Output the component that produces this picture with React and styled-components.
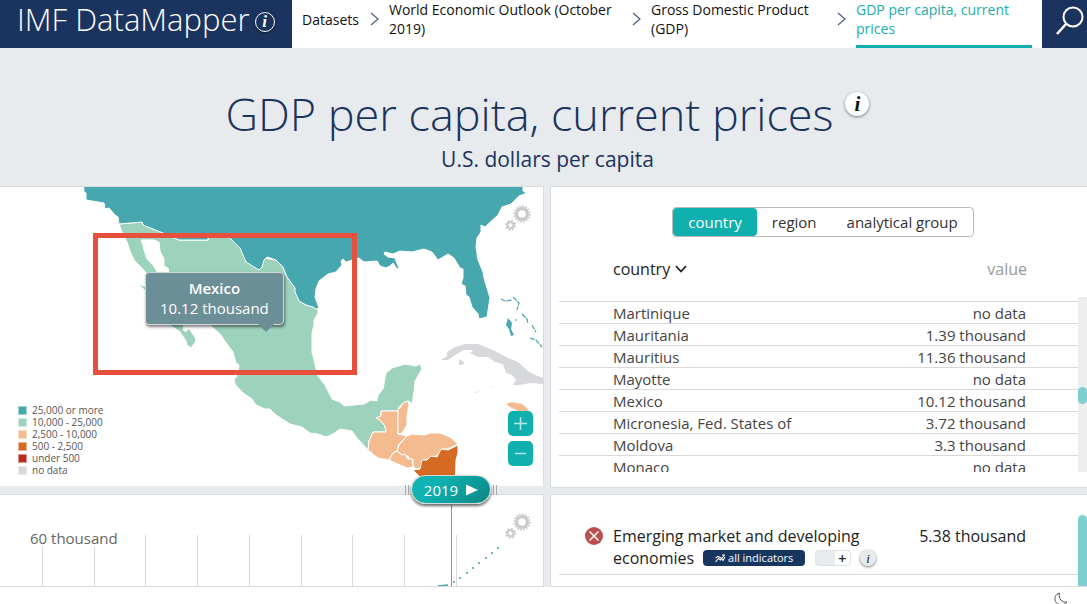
import { useState } from "react";
import styled, { createGlobalStyle } from "styled-components";

const crumbs = [
    { label: "Datasets", width: 58 },
    { label: "World Economic Outlook (October 2019)", width: 233 },
    { label: "Gross Domestic Product (GDP)", width: 176 },
    { label: "GDP per capita, current prices", width: 176, active: true },
];

const tabs = ["country", "region", "analytical group"];

const countries = [
    { name: "Martinique", value: "no data" },
    { name: "Mauritania", value: "1.39 thousand" },
    { name: "Mauritius", value: "11.36 thousand" },
    { name: "Mayotte", value: "no data" },
    { name: "Mexico", value: "10.12 thousand" },
    { name: "Micronesia, Fed. States of", value: "3.72 thousand" },
    { name: "Moldova", value: "3.3 thousand" },
    { name: "Monaco", value: "no data" },
];

const legend = [
    { label: "25,000 or more", color: "#47a7af" },
    { label: "10,000 - 25,000", color: "#9dd3bc" },
    { label: "2,500 - 10,000", color: "#f3bb8f" },
    { label: "500 - 2,500", color: "#d66a22" },
    { label: "under 500", color: "#bd2a1a" },
    { label: "no data", color: "#d7d8dc" },
];

const gridLines = [42, 94, 145, 197, 249, 301, 352, 404, 456];
const forecast = [[454, 87], [460, 83], [467, 78], [473, 73], [479, 68], [486, 63], [492, 58], [498, 53]];

/* Gears : settings icon shown in the corner of the map and of the chart */
const Gears = () => (
    <svg width="26" height="26" viewBox="0 0 26 26" fill="none" stroke="#c9c9c9" aria-hidden="true">
        <circle cx="17" cy="9" r="5.4" strokeWidth="3.2" />
        <circle cx="17" cy="9" r="7.7" strokeWidth="2" strokeDasharray="1.51 1.51" />
        <circle cx="5.5" cy="20.3" r="3" strokeWidth="1.9" />
        <circle cx="5.5" cy="20.3" r="4.6" strokeWidth="1.8" strokeDasharray="1.81 1.81" />
    </svg>
);

/* Chevron : separator between the breadcrumb items */
const Chevron = () => (
    <svg width="9" height="14" viewBox="0 0 9 14" fill="none" stroke="#4a5c85" strokeWidth="1.2" aria-hidden="true">
        <path d="M1 1 L8 7 L1 13" />
    </svg>
);

const WorldMap = () => (
    <MapSvg viewBox="0 187 543 299" preserveAspectRatio="xMinYMin slice" aria-label="Map">
        <g stroke="#fff" strokeWidth="1" strokeLinejoin="round">
            <path fill="#9dd3bc" d="M119 224 L122 232 127 242 130 251 134 260 142 268 147 274 155 290 160 310 170 325 180 332 186 341 187 345 191 348 196 341 195 337 190 330 188 328 187 331 184 331 183 325 176 305 166 288 157 272 153 265 147 259 144 250 143 245 141 240 154 240 159 242 160 251 164 259 164 266 168 268 169 273 180 290 195 306 210 325 220 334 227 344 233 352 236 363 239 365 238 372 236 378 234 377 235 384 241 391 246 395 252 399 256 405 265 409 270 409 276 415 290 424 302 427 310 433 318 434 326 437 333 434 340 429 346 430 352 431 357 438 368 450 369 441 373 432 386 432 385 426 380 420 376 418 381 416 381 411 398 411 399 407 405 402 409 401 412 404 414 392 415 381 422 369 420 364 416 366 405 364 392 368 386 373 383 389 378 395 377 401 371 400 364 404 344 406 340 402 332 399 325 385 318 376 312 352 312 333 314 325 314 320 318 313 318 308 306 305 299 301 295 288 287 277 283 267 276 260 264 258 240 248 231 239 225 234 208 234 208 240 179 240 163 233 143 225 142 222 Z" />
            <path fill="#47a7af" d="M83 180 L84 192 86 193 86 200 104 203 105 209 109 208 115 215 118 217 119 224 142 222 143 225 163 233 179 240 208 240 208 234 225 234 231 239 240 248 246 262 259 270 262 267 264 260 267 257 276 260 283 267 287 277 295 288 295 292 299 301 306 305 313 307 316 309 319 308 318 305 315 297 316 289 319 281 328 274 336 272 342 265 341 261 343 259 346 262 359 258 364 262 377 261 380 266 386 268 390 266 393 263 397 269 399 268 396 261 395 258 388 257 384 254 385 252 393 254 400 251 412 252 424 249 432 252 438 260 448 254 454 258 460 268 463 269 463 278 461 284 465 286 466 295 469 297 472 307 478 314 479 319 487 317 490 298 484 278 483 272 478 260 476 247 477 238 481 232 481 225 485 227 498 215 502 207 511 204 519 196 527 193 523 191 523 180 Z" />
            <path fill="#f3bb8f" d="M381 411 L398 411 398 434 407 436 398 445 398 450 393 453 389 460 378 458 368 450 369 441 373 432 386 432 385 426 380 420 376 418 381 416 Z" />
            <path fill="#f3bb8f" d="M398 409 L400 408 403 403 408 401 409 405 407 415 407 425 402 433 398 434 Z" />
            <path fill="#f3bb8f" d="M407 436 L412 434 425 435 430 433 440 433 450 437 458 444 454 446 448 449 442 449 438 455 432 458 424 460 421 468 416 469 413 466 413 459 409 459 408 456 402 455 397 451 399 445 Z" />
            <path fill="#f3bb8f" d="M389 460 L393 453 397 451 402 455 405 454 408 459 412 459 413 467 407 468 400 465 Z" />
            <path fill="#d66a22" d="M458 445 L458 453 456 460 455 487 424 487 419 476 413 470 420 469 422 460 427 460 431 456 437 457 441 449 448 450 Z" />
        </g>
        <path fill="#9dd3bc" d="M140 285 L145 287 145 290 Z" />
        <path fill="#f3bb8f" d="M506 404 L512 402 522 404 526 407 529 411 520 412 510 407 Z" />
        <g fill="#d7d8dc">
            <path d="M441 360 L447 356 447 352 455 347 465 344 478 344 488 348 497 352 508 358 518 362 528 371 535 375 544 378 544 384 530 383 520 385 513 385 516 380 512 375 506 373 503 364 495 362 488 357 478 357 470 353 473 350 464 350 455 355 448 360 Z" />
            <path d="M459 359 L464 362 463 365 459 365 Z M475 392 L479 391 477 393 Z M489 388 L492 386 492 387 Z" />
        </g>
        <g fill="none" stroke="#47a7af" strokeWidth="1.2" strokeDasharray="5 1">
            <path d="M501 299 L505 301 512 300 M513 297 L519 303 517 310 M522 314 L527 319 528 324 M532 325 L536 332 M530 338 L536 340 542 347 M515 320 L517 320" />
        </g>
        <path fill="#47a7af" d="M508 318 L512 323 511 329 514 335 511 336 509 329 506 325 Z" />
    </MapSvg>
);

const App = () => {
    const [selectedTab, setSelectedTab] = useState("country");

    return (
    <>
    <GlobalStyle />
    <Header>
        <Brand>
            <BrandName href="#">IMF DataMapper</BrandName>
            <InfoButton $size={20} $dark aria-label="About">i</InfoButton>
        </Brand>
        <Breadcrumbs>
            {crumbs.map((crumb, index) => (
                <CrumbItem key={crumb.label}>
                    {index > 0 && <Chevron />}
                    <CrumbLink href="#" $width={crumb.width} $active={crumb.active}>
                        {crumb.label}
                    </CrumbLink>
                </CrumbItem>
            ))}
        </Breadcrumbs>
        <SearchButton aria-label="Search">
            <svg width="30" height="30" viewBox="0 0 30 30" fill="none" stroke="#fff" strokeWidth="2">
                <circle cx="18" cy="11" r="9.5" />
                <path d="M11 18 L2 28" strokeWidth="2.6" />
            </svg>
        </SearchButton>
    </Header>

    <Hero>
        <TitleRow>
            <Title>GDP per capita, current prices</Title>
            <InfoButton $size={24} aria-label="Indicator details">i</InfoButton>
        </TitleRow>
        <Subtitle>U.S. dollars per capita</Subtitle>
    </Hero>

    <Panels>
        <Column>
            <MapPanel>
                <WorldMap />
                <Highlight />
                <Tooltip>
                    <strong>Mexico</strong>
                    <span>10.12 thousand</span>
                </Tooltip>
                <SettingsButton aria-label="Map settings"><Gears /></SettingsButton>
                <ZoomControls>
                    <ZoomButton aria-label="Zoom in">
                        <svg width="13" height="13" stroke="#b5e8e7" strokeWidth="1.5"><path d="M0 6.5 H13 M6.5 0 V13" /></svg>
                    </ZoomButton>
                    <ZoomButton aria-label="Zoom out">
                        <svg width="13" height="13" stroke="#b5e8e7" strokeWidth="1.5"><path d="M1 6.5 H12" /></svg>
                    </ZoomButton>
                </ZoomControls>
                <Legend>
                    {legend.map((item) => (
                        <LegendItem key={item.label}>
                            <Swatch $color={item.color} />
                            {item.label}
                        </LegendItem>
                    ))}
                </Legend>
            </MapPanel>
            <ChartPanel>
                <ChartLabel>60 thousand</ChartLabel>
                <ChartSvg viewBox="0 0 543 91" preserveAspectRatio="xMinYMin slice" aria-label="Chart">
                    {gridLines.map((x, index) => (
                        <path key={x} d={`M${x + 0.5} ${index < 2 ? 52 : 40} V92`} stroke="#d9d9d9" />
                    ))}
                    <path d="M451.5 10 V92" stroke="#5ba5ac" />
                    <path d="M438 91 L448 90" stroke="#47a7af" strokeWidth="1.5" />
                    {forecast.map(([x, y]) => (
                        <circle key={x} cx={x} cy={y} r="1.1" fill="#47a7af" />
                    ))}
                </ChartSvg>
                <SettingsButton aria-label="Chart settings"><Gears /></SettingsButton>
                <YearControl>
                    <Grip />
                    <YearButton>
                        2019
                        <svg width="12" height="12" viewBox="0 0 12 12" fill="#fff"><path d="M0 0.5 L12 6 L0 11.5 Z" /></svg>
                    </YearButton>
                    <Grip />
                </YearControl>
            </ChartPanel>
        </Column>

        <Column>
            <ListPanel>
                <Tabs>
                    {tabs.map((tab) => (
                        <TabButton key={tab} $active={tab === selectedTab} onClick={() => setSelectedTab(tab)}>
                            {tab}
                        </TabButton>
                    ))}
                </Tabs>
                <SortRow>
                    <SortButton>
                        country
                        <svg width="12" height="8" viewBox="0 0 12 8" fill="none" stroke="#222" strokeWidth="1.8"><path d="M1 1 L6 6.5 L11 1" /></svg>
                    </SortButton>
                    <SortButton $muted>value</SortButton>
                </SortRow>
                <ScrollArea>
                    <CountryTable>
                        <tbody>
                            {countries.map((country) => (
                                <tr key={country.name}>
                                    <th scope="row">{country.name}</th>
                                    <td>{country.value}</td>
                                </tr>
                            ))}
                        </tbody>
                    </CountryTable>
                    <ScrollTrack>
                        <ScrollThumb />
                    </ScrollTrack>
                </ScrollArea>
            </ListPanel>
            <SelectionPanel>
                <Selection>
                    <RemoveButton aria-label="Remove">
                        <svg width="18" height="18" viewBox="0 0 18 18" fill="none" stroke="#fff" strokeWidth="1.5">
                            <circle cx="9" cy="9" r="9" fill="#bd4e50" stroke="none" />
                            <path d="M4.5 4.5 L13.5 13.5 M13.5 4.5 L4.5 13.5" />
                        </svg>
                    </RemoveButton>
                    <SelectionName>
                        Emerging market and developing
                        <SelectionLine>
                            economies
                            <IndicatorsButton>
                                <svg width="11" height="9" viewBox="0 0 11 9" fill="none" stroke="#fff" strokeWidth="1.1">
                                    <path d="M0.5 8 L3.5 4.5 L5.5 6 L9.5 1 M0.5 4 L3 2.5 L6 4 L8 6.5 L10 3 M7 1 H10" />
                                </svg>
                                all indicators
                            </IndicatorsButton>
                            <AddButton aria-label="Add">+</AddButton>
                            <InfoButton $size={16} $soft aria-label="Group details">i</InfoButton>
                        </SelectionLine>
                    </SelectionName>
                    <SelectionValue>5.38 thousand</SelectionValue>
                </Selection>
                <SideBar />
            </SelectionPanel>
        </Column>
    </Panels>

    <Footer>
        <ThemeButton aria-label="Dark mode">
            <svg width="14" height="14" viewBox="0 0 14 14" fill="none" stroke="#555" strokeWidth="1">
                <path d="M5.5 1 C1.5 2 0 6 1.5 9.5 C3.5 13.5 10 14 13 10 C8 11 4 6.5 5.5 1 Z" />
            </svg>
        </ThemeButton>
    </Footer>
    </>
)}

export default App;

const GlobalStyle = createGlobalStyle`
    * {
        box-sizing: border-box;
    }

    body {
        margin: 0;
        background-color: #fff;
        color: #444;
        font-family: "Open Sans", "Noto Sans", sans-serif;
        font-size: 16px;
        overflow: hidden;
    }

    button {
        padding: 0;
        border: none;
        background: none;
        color: inherit;
        font: inherit;
        cursor: pointer;
    }

    svg {
        display: block;
        flex: none;
    }
`

const Header = styled.header`
    display: flex;
    height: 48px;
    background-color: #fff;
`

const Brand = styled.div`
    display: flex;
    flex: none;
    align-items: center;
    gap: 5px;
    width: 292px;
    padding: 0 0 5px 17px;
    background-color: #1b335f;
`

const BrandName = styled.a`
    align-self: flex-start;
    color: #fff;
    font-size: 31px;
    font-weight: 300;
    line-height: 38px;
    white-space: nowrap;
    text-decoration: none;
`

const InfoButton = styled.button`
    display: flex;
    flex: none;
    align-items: center;
    justify-content: center;
    width: ${({ $size }) => $size}px;
    height: ${({ $size }) => $size}px;
    border: ${({ $dark }) => ($dark ? "1px solid #fff" : "none")};
    border-radius: 50%;
    background-color: ${({ $dark, $soft }) => ($dark ? "transparent" : $soft ? "#e8ebee" : "#fff")};
    box-shadow: 0 1px 3px rgba(0, 0, 0, 0.5);
    color: ${({ $dark }) => ($dark ? "#fff" : "#111")};
    font-family: "Liberation Serif", serif;
    font-size: ${({ $size }) => $size - 3}px;
    font-style: italic;
    font-weight: ${({ $soft }) => ($soft ? 400 : 700)};
    line-height: 1;
`

const Breadcrumbs = styled.nav`
    display: flex;
    flex: 1;
    gap: 10px;
    padding-left: 10px;
`

const CrumbItem = styled.div`
    display: flex;
    align-items: center;
    gap: 10px;

    > svg {
        margin-bottom: 10px;
    }
`

const CrumbLink = styled.a`
    display: flex;
    align-items: center;
    width: ${({ $width }) => $width}px;
    height: 48px;
    padding-bottom: ${({ $active }) => ($active ? 7 : 10)}px;
    border-bottom: ${({ $active }) => ($active ? "3px solid #0fb0ae" : "none")};
    color: ${({ $active }) => ($active ? "#22adab" : "#111")};
    font-size: 14px;
    line-height: 19px;
    text-decoration: none;
`

const SearchButton = styled.button`
    display: flex;
    flex: none;
    width: 45px;
    padding: 6px 0 0 13px !important;
    background-color: #1b335f !important;
`

const Hero = styled.section`
    display: flex;
    flex-direction: column;
    align-items: center;
    height: 138px;
    padding: 35px 0 0 8px;
    background-color: #e8ebee;
    color: #1b335f;
`

const TitleRow = styled.div`
    display: flex;
    gap: 12px;

    button {
        margin-top: 9px;
    }
`

const Title = styled.h1`
    margin: 0;
    font-size: 45px;
    font-weight: 300;
    line-height: 62px;
    white-space: nowrap;
`

const Subtitle = styled.p`
    margin: 0;
    font-size: 21px;
    line-height: 28px;
`

const Panels = styled.main`
    display: grid;
    grid-template-columns: minmax(0, 544fr) minmax(0, 537fr);
    gap: 6px;
    background-color: #e8ebee;
`

const Column = styled.div`
    display: flex;
    flex-direction: column;
    gap: 7px;
`

const Panel = styled.section`
    position: relative;
    border: 1px solid #d9dbde;
    background-color: #fff;
`

const MapPanel = styled(Panel)`
    display: flex;
    align-items: flex-end;
    height: 301px;
    border-left: none;
    border-bottom-color: #e8ebee;
    overflow: hidden;
`

const MapSvg = styled.svg`
    position: absolute;
    inset: 0;
    width: 100%;
    height: 100%;
`

const Highlight = styled.div`
    position: absolute;
    top: 46px;
    left: 93px;
    width: 264px;
    height: 142px;
    border: 5px solid #e94f3d;
`

const Tooltip = styled.div`
    position: absolute;
    top: 85px;
    left: 145px;
    display: flex;
    flex-direction: column;
    align-items: center;
    padding: 6px 14px;
    border: 1px solid #d3d8da;
    border-radius: 4px;
    background-color: #6c8e97;
    box-shadow: 1px 2px 3px rgba(0, 0, 0, 0.5);
    color: #fff;
    font-size: 15px;
    line-height: 20px;
    white-space: nowrap;

    strong {
        font-weight: 600;
        line-height: 19px;
    }

    &::after {
        content: "";
        position: absolute;
        top: 100%;
        right: 9px;
        border: 8px solid transparent;
        border-top-color: #6c8e97;
        border-bottom: none;
    }
`

const SettingsButton = styled.button`
    position: absolute;
    top: 18px;
    right: 12px;
`

const ZoomControls = styled.div`
    position: absolute;
    right: 10px;
    bottom: 20px;
    display: flex;
    flex-direction: column;
    gap: 5px;
`

const ZoomButton = styled.button`
    display: flex;
    align-items: center;
    justify-content: center;
    width: 25px;
    height: 25px;
    border-radius: 5px !important;
    background-color: #0fb0ae !important;
`

const Legend = styled.ul`
    position: relative;
    margin: 0 0 10px 18px;
    padding: 0;
    list-style: none;
`

const LegendItem = styled.li`
    display: flex;
    align-items: center;
    gap: 5px;
    color: #555;
    font-size: 10px;
    line-height: 12px;
`

const Swatch = styled.span`
    width: 9px;
    height: 9px;
    border: 1px solid rgba(255, 255, 255, 0.5);
    background-color: ${({ $color }) => $color};
`

const ChartPanel = styled(Panel)`
    height: 93px;
    border-left: none;
`

const ChartLabel = styled.div`
    position: absolute;
    top: 33px;
    left: 30px;
    color: #666;
    font-size: 15px;
    line-height: 20px;
`

const ChartSvg = styled.svg`
    width: 100%;
    height: 91px;
`

const YearControl = styled.div`
    position: absolute;
    top: -20px;
    left: 405px;
    display: flex;
    align-items: center;
    gap: 2px;
`

const Grip = styled.span`
    width: 4px;
    height: 10px;
    border: 1px solid #aaa;
    border-width: 0 1px;
`

const YearButton = styled.button`
    display: flex;
    align-items: center;
    justify-content: center;
    gap: 8px;
    width: 80px;
    height: 29px;
    border: 1px solid #d5dcdc !important;
    border-radius: 15px !important;
    background: linear-gradient(135deg, #0fb3b1 30%, #0b8583) !important;
    box-shadow: 0 2px 3px rgba(0, 0, 0, 0.6);
    color: #fff !important;
    font-size: 15px !important;
    font-weight: 500 !important;
`

const ListPanel = styled(Panel)`
    display: flex;
    flex-direction: column;
    height: 302px;
    margin-bottom: -1px;
    padding-top: 20px;
    border-right: none;
`

const Tabs = styled.div`
    display: flex;
    align-self: center;
    height: 30px;
    margin-left: 8px;
    border: 1px solid #bbb;
    border-radius: 4px;
`

const TabButton = styled.button`
    height: 28px;
    padding: 0 15px !important;
    border-radius: 4px !important;
    background-color: ${({ $active }) => ($active ? "#0fb0ae" : "transparent")} !important;
    color: ${({ $active }) => ($active ? "#fff" : "#333")} !important;
    font-size: 15px !important;
    font-weight: ${({ $active }) => ($active ? 500 : 400)} !important;
`

const SortRow = styled.div`
    display: flex;
    align-items: center;
    justify-content: space-between;
    height: 60px;
    padding: 4px 60px 0 62px;
`

const SortButton = styled.button`
    display: flex;
    align-items: center;
    gap: 5px;
    color: ${({ $muted }) => ($muted ? "#999" : "#222")} !important;
`

const ScrollArea = styled.div`
    display: flex;
    height: 175px;
    overflow: hidden;
`

const CountryTable = styled.table`
    flex: 1;
    align-self: flex-start;
    margin: 4px 0 0 8px;
    border-collapse: collapse;
    font-size: 15px;
    line-height: 20px;

    tr {
        border-top: 1px solid #d9d9d9;
    }

    th,
    td {
        padding: 1px 0 0;
    }

    th {
        padding-left: 54px;
        font-weight: 400;
        text-align: left;
    }

    td {
        padding-right: 52px;
        text-align: right;
    }
`

const ScrollTrack = styled.div`
    width: 9px;
    padding-top: 90px;
    background-color: #eee;
`

const ScrollThumb = styled.div`
    height: 17px;
    border-radius: 5px;
    background-color: #7dd0cf;
`

const SelectionPanel = styled(Panel)`
    display: flex;
    height: 93px;
    padding-top: 20px;
    border-right: none;
`

const Selection = styled.div`
    display: flex;
    flex: 1;
    align-items: flex-start;
    height: 60px;
    margin-left: 8px;
    padding: 10px 52px 0 26px;
    border-bottom: 1px solid #d9d9d9;
    color: #222;
    line-height: 22px;
`

const RemoveButton = styled.button`
    margin: 2px 10px 0 0;
`

const SelectionName = styled.div`
    flex: 1;
    white-space: nowrap;
`

const SelectionLine = styled.div`
    display: flex;
    align-items: center;
`

const IndicatorsButton = styled.button`
    display: flex;
    align-items: center;
    justify-content: center;
    gap: 2px;
    width: 102px;
    height: 16px;
    margin: 0 10px 0 9px;
    border-radius: 4px !important;
    background-color: #17365f !important;
    color: #fff !important;
    font-size: 11px !important;
    font-weight: 500 !important;
`

const AddButton = styled.button`
    width: 36px;
    height: 16px;
    margin-right: 9px;
    padding-left: 18px !important;
    border: 1px solid #dfe2e5 !important;
    border-radius: 4px !important;
    background: linear-gradient(to right, #e8ebee 55%, #fff 55%) !important;
    font-size: 14px !important;
    font-weight: 600 !important;
    line-height: 13px !important;
`

const SelectionValue = styled.div`
    white-space: nowrap;
`

const SideBar = styled.div`
    width: 9px;
    border-radius: 5px 5px 0 0;
    background-color: #7dd0cf;
`

const Footer = styled.footer`
    display: flex;
    justify-content: flex-end;
    height: 24px;
    padding: 5px 19px 0 0;
    background-color: #fff;
`

const ThemeButton = styled.button`
    align-self: flex-start;
`
